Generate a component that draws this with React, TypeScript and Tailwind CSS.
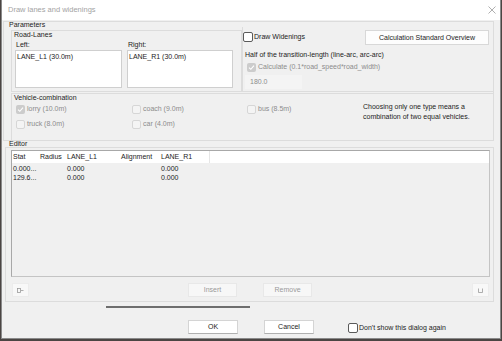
import React from "react";

const font = "font-['Liberation_Sans',Arial,sans-serif]";

const Box: React.FC<{ checked?: boolean; disabled?: boolean }> = ({ checked, disabled }) => {
  if (checked) {
    return (
      <span className="flex h-[9px] w-[9px] shrink-0 items-center justify-center rounded-[2px] bg-[#cccccc]">
        <svg width="7" height="7" viewBox="0 0 7 7">
          <path d="M1 3.6 L2.8 5.3 L6 1.6" stroke="#ffffff" strokeWidth="1.1" fill="none" />
        </svg>
      </span>
    );
  }
  return (
    <span
      className={
        disabled
          ? "h-[9px] w-[9px] shrink-0 rounded-[2px] border border-[#d6d6d6] bg-[#f4f4f4]"
          : "h-[10px] w-[10px] shrink-0 rounded-[2px] border border-[#5a5a5a] bg-white"
      }
    />
  );
};

const Vehicle: React.FC<{ label: string; checked?: boolean; w: string }> = ({ label, checked, w }) => (
  <div className={`flex h-[10px] items-center gap-[2px] ${w}`}>
    <Box checked={checked} disabled />
    <span className="text-[#8c8c8c]">{label}</span>
  </div>
);

export default function App() {
  return (
    <div className={`h-[341px] w-[502px] bg-[#4b4543] pl-[1px] text-[7px] leading-[8px] text-[#1c1c1c] ${font}`}>
      <div className="flex h-[339px] w-[500px] flex-col border border-t-0 border-[#8a8a8a] bg-[#f0f0f0]">
        {/* title bar */}
        <div className="flex h-[20px] items-center justify-between bg-white pl-[6px] pr-[4px]">
          <span className="text-[7.5px] text-[#a3a3a3]">Draw lanes and widenings</span>
          <svg width="8" height="8" viewBox="0 0 8 8">
            <path d="M0.5 0.5 L7.5 7.5 M7.5 0.5 L0.5 7.5" stroke="#9a9a9a" strokeWidth="0.8" />
          </svg>
        </div>

        {/* Parameters */}
        <div className="ml-[1px] mt-[1px] flex h-[120px] w-[491px] flex-col border border-[#dcdcdc]">
          <div className="flex">
            <div className="flex w-[238px] flex-col">
              <div className="h-[8px] pl-[5px] leading-[6px]">Parameters</div>
              <div className="ml-[7px] flex h-[62px] w-[231px] flex-col border border-[#dcdcdc]">
                <div className="pl-[2px]">Road-Lanes</div>
                <div className="ml-[3px] mt-[2px] flex gap-[5px]">
                  <div className="flex w-[107px] flex-col">
                    <span className="pl-[1px]">Left:</span>
                    <div className="mt-[1px] h-[38px] border border-[#cfcfcf] bg-white pl-[1px] pt-[2px]">LANE_L1 (30.0m)</div>
                  </div>
                  <div className="flex w-[106px] flex-col">
                    <span className="pl-[1px]">Right:</span>
                    <div className="mt-[1px] h-[38px] border border-[#cfcfcf] bg-white pl-[1px] pt-[2px]">LANE_R1 (30.0m)</div>
                  </div>
                </div>
              </div>
            </div>

            <div className="mt-[5px] flex h-[65px] w-[251px] flex-col border-b border-l border-[#dcdcdc]">
              <div className="mt-[3px] flex items-start pr-[4px]">
                <div className="flex items-center gap-[1px] pt-[2px]">
                  <Box />
                  <span>Draw Widenings</span>
                </div>
                <button className="ml-auto h-[15px] w-[124px] border border-[#d8d8d8] bg-[#fdfdfd] text-center">
                  Calculation Standard Overview
                </button>
              </div>
              <div className="mt-[6px] pl-[2px]">Half of the transition-length (line-arc, arc-arc)</div>
              <div className="mt-[3px] flex h-[10px] items-center gap-[2px] pl-[4px]">
                <Box checked />
                <span className="text-[#8c8c8c]">Calculate (0.1*road_speed*road_width)</span>
              </div>
              <div className="ml-[2px] mt-[3px] flex h-[14px] w-[57px] items-center bg-[#f4f4f4] pl-[5px] text-[#8c8c8c]">
                180.0
              </div>
            </div>
          </div>

          {/* Vehicle-combination */}
          <div className="ml-[7px] mt-[1px] flex h-[47px] flex-col border-l border-t border-[#dcdcdc]">
            <div className="pl-[2px] leading-[7px]">Vehicle-combination</div>
            <div className="mt-[3px] flex pl-[4px]">
              <div className="flex flex-col gap-[5px]">
                <div className="flex">
                  <Vehicle label="lorry (10.0m)" checked w="w-[116px]" />
                  <Vehicle label="coach (9.0m)" w="w-[115px]" />
                  <Vehicle label="bus (8.5m)" w="w-[116px]" />
                </div>
                <div className="flex">
                  <Vehicle label="truck (8.0m)" w="w-[116px]" />
                  <Vehicle label="car (4.0m)" w="w-[115px]" />
                </div>
              </div>
              <div className="mt-[-2px] leading-[10px]">
                Choosing only one type means a
                <br />
                combination of two equal vehicles.
              </div>
            </div>
          </div>
        </div>

        {/* Editor */}
        <div className="h-[6px] pl-[7px] leading-[6px]">Editor</div>
        <div className="ml-[3px] flex h-[155px] w-[489px] flex-col border border-[#dcdcdc]">
          <div className="ml-[5px] mt-[2px] flex h-[127px] w-[479px] flex-col border border-[#c4c4c4] border-l-[#a8a8a8] border-t-[#a8a8a8]">
            <div className="flex h-[12px] items-center bg-white pl-[1px]">
              <span className="w-[27px]">Stat</span>
              <span className="w-[27px]">Radius</span>
              <span className="w-[54px]">LANE_L1</span>
              <span className="w-[40px]">Alignment</span>
              <span className="h-full w-[49px] border-r border-[#e6e6e6] leading-[12px]">LANE_R1</span>
            </div>
            <div className="mt-[1px] flex h-[9px] pl-[1px] leading-[9px]">
              <span className="w-[54px]">0.000...</span>
              <span className="w-[94px]">0.000</span>
              <span>0.000</span>
            </div>
            <div className="flex h-[9px] pl-[1px] leading-[9px]">
              <span className="w-[54px]">129.6...</span>
              <span className="w-[94px]">0.000</span>
              <span>0.000</span>
            </div>
          </div>
          <div className="mt-[6px] flex items-center pr-[4px]">
            <button className="ml-[6px] flex h-[14px] w-[17px] items-center justify-center border border-[#ececec] bg-[#f8f8f8]">
              <svg width="7" height="5" viewBox="0 0 7 5">
                <rect x="0.5" y="0.5" width="3" height="4" fill="none" stroke="#9a9a9a" strokeWidth="0.8" />
                <path d="M4 2.5 L6.5 2.5" stroke="#9a9a9a" strokeWidth="0.8" />
              </svg>
            </button>
            <button className="ml-[159px] h-[14px] w-[49px] border border-[#e8e8e8] bg-[#f7f7f7] text-[#9a9a9a]">
              Insert
            </button>
            <button className="ml-[26px] h-[14px] w-[49px] border border-[#e8e8e8] bg-[#f7f7f7] text-[#9a9a9a]">
              Remove
            </button>
            <button className="ml-auto flex h-[14px] w-[17px] items-center justify-center border border-[#ececec] bg-[#f8f8f8]">
              <svg width="5" height="5" viewBox="0 0 5 5">
                <path d="M0.5 0.5 L0.5 4.5 L4.5 4.5 L4.5 0.5" fill="none" stroke="#9a9a9a" strokeWidth="0.8" />
              </svg>
            </button>
          </div>
        </div>

        <div className="ml-[104px] mt-[4px] h-[2px] w-[144px] bg-[#6e6e6e]" />

        <div className="mt-[12px] flex h-[14px] items-center">
          <button className="ml-[186px] h-[14px] w-[50px] border border-[#d4d4d4] border-b-[#b0b0b0] bg-white">OK</button>
          <button className="ml-[26px] h-[14px] w-[50px] border border-[#d4d4d4] border-b-[#b0b0b0] bg-white">Cancel</button>
          <div className="ml-[34px] mt-[2px] flex items-center gap-[1px]">
            <Box />
            <span>Don&apos;t show this dialog again</span>
          </div>
        </div>
      </div>
    </div>
  );
}
